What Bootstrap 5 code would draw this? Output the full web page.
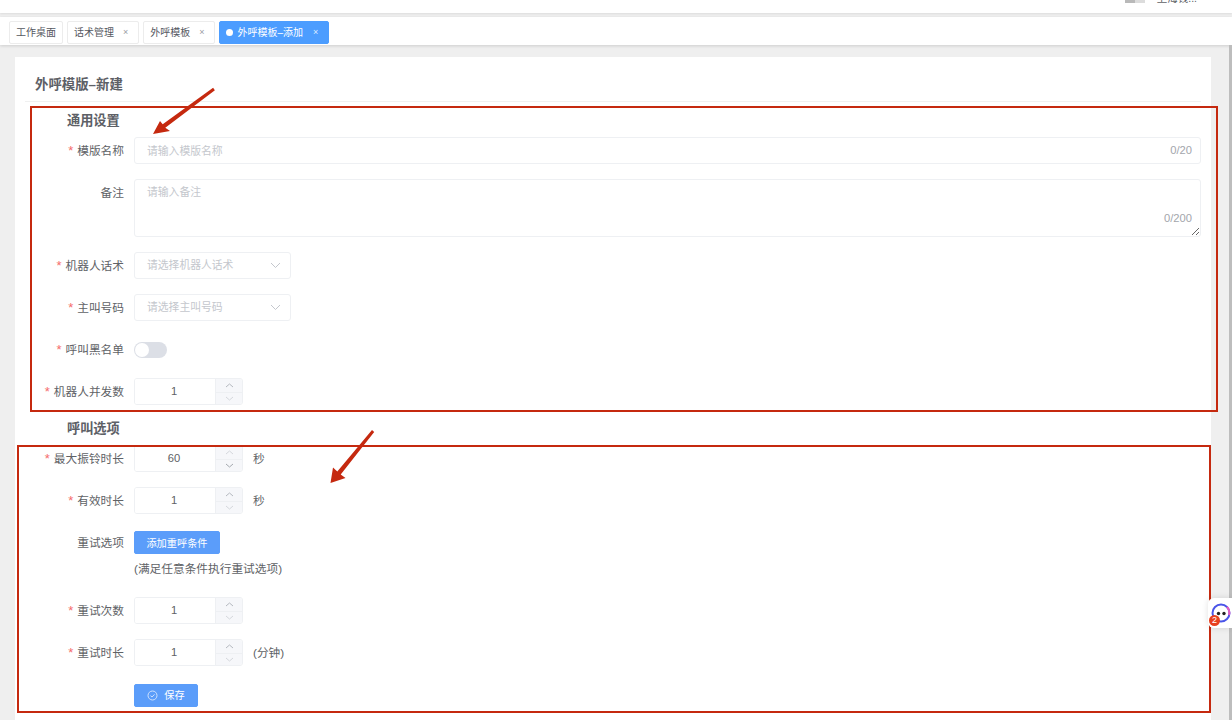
<!DOCTYPE html>
<html lang="zh-CN">
<head>
<meta charset="utf-8">
<title>外呼模版-新建</title>
<link href="https://cdn.jsdelivr.net/npm/bootstrap@5.3.0/dist/css/bootstrap.min.css" rel="stylesheet">
<style>
html,body{height:720px;overflow:hidden}
body{background:#efefef;font-family:"Liberation Sans","Noto Sans CJK SC",sans-serif;font-size:11.7px;color:#606266;position:relative}
.topstrip{height:13px;background:#fff;overflow:hidden;margin-bottom:4px;position:relative;box-shadow:0 1px 2px rgba(0,0,0,.08)}
.topuser{height:13px;margin-top:-8px;padding-right:35px;color:#606266;font-size:10.5px;gap:12px}
.topavatar{width:20px;height:8px;background:linear-gradient(90deg,#b9b9b9 50%,#dcdcdc 50%)}
.tabstrip{height:28px;background:#fff;padding:4px 9px 0;gap:4px;box-shadow:0 1px 3px rgba(0,0,0,.14);position:relative}
.tabitem{height:23px;padding:0 6px;background:#fff;border:1px solid #ececec;border-radius:2px;font-size:10px;color:#55585f;white-space:nowrap}
.tabitem b{font-weight:400;font-size:9px;color:#9a9da3;margin-left:9px;margin-right:3px}
.tabitem:nth-child(2) b{margin-right:4px}
.tabon{background:#4c9dff;border-color:#4c9dff;color:#fff}
.tabon b{color:#dcebff;margin-left:10px;margin-right:4px}
.tabdot{width:7px;height:7px;border-radius:50%;background:#fff;margin-right:5px}
.pagebody{padding:12px 21px 0 15px}
.sheet{height:663px;background:#fff;padding:0 10px}
.sheethead{height:45px;padding-left:10px;margin-bottom:9px;border-bottom:1px solid #f0f0f0;font-size:13.4px;font-weight:700;color:#5d6066;line-height:56px}
.grouptitle{height:18px;line-height:19px;padding-left:42px;font-size:13.2px;font-weight:700;color:#5d6066;margin-bottom:8px}
.groupgap{margin-top:14px;margin-bottom:7px;line-height:17px}
.fieldrow{min-height:27px;margin-bottom:15px;margin-left:-10px}
.fieldlabel{width:109px;height:27px;margin-right:10px;text-align:right;flex:none;line-height:27.5px;color:#606266;font-size:11.7px}
.req{color:#f56c6c;margin-right:4px;font-size:13px;line-height:1}
.fieldbox{height:27px;line-height:27px;border:1px solid #eef0f3;border-radius:3px;background:#fff;padding:0 12px 0 12px;font-size:10.8px;color:#c4c7cd}
.namebox{width:1067px}
.form-control.namebox,.form-control.notebox{font-size:10.8px;color:#606266;border-color:#eef0f3;border-radius:3px;box-shadow:none;padding-left:12px}
.form-control.namebox{height:27px;min-height:27px;padding-top:0;padding-bottom:0}
.form-control.notebox{height:58px;width:1067px;padding-top:4px;resize:both}
.form-control::placeholder{color:#c4c7cd}
.counter{position:absolute;right:9px;color:#a3a6ac;font-size:11.2px}
.notecount{bottom:10px}
.namecount{top:0;line-height:27px}
.selbox{width:157px;padding-right:9px}
.stepper{width:109px;height:27px;border:1px solid #eef0f3;border-radius:3px;overflow:hidden;background:#fff}
.stepval{width:80px;text-align:center;border:0;outline:0;padding:0 2px 0 0;background:#fff;color:#606266;font-size:11.2px}
.stepbtns{width:27px;background:#f6f7fa;border-left:1px solid #eef0f3}
.stepbtns span{flex:1 1 50%}
.stepbtns span+span{border-top:1px solid #eef0f3}
.unit{margin-left:10px;line-height:27px;color:#606266;font-size:11.7px}
.switchtrack{width:33px;height:16px;border-radius:8px;background:#dcdfe6;padding:1px;margin-top:6px}
.switchknob{width:14px;height:14px;border-radius:50%;background:#fff}
.btn.addbtn{width:86px;height:23px;padding:0;font-size:10.2px;line-height:23px;border-radius:2px;background:#5b9dfa;border-color:#5b9dfa;color:#fff;margin-top:2px}
.btn.savebtn{width:64px;height:23px;padding:0;font-size:10.2px;border-radius:2px;background:#5b9dfa;border-color:#5b9dfa;color:#fff;gap:6px;margin-top:3px}
.retrynote{line-height:18px;margin-top:6px;color:#606266;font-size:11.7px}
.retryrow{height:53px;margin-bottom:15px}
.markbox{position:absolute;border:2px solid #c5290f;pointer-events:none}
.markone{left:30px;top:106px;width:1188px;height:306px}
.marktwo{left:17px;top:445px;width:1194px;height:268px}
.markarrow{position:absolute;left:0;top:0;pointer-events:none}
.edgebar{position:absolute;right:0;top:45px;width:3px;height:675px;background:#bdbdbd}
.chatdock{position:absolute;left:1208px;top:598px;width:24px;height:30px;background:#fff;border-radius:6px 0 0 6px;box-shadow:0 0 6px rgba(0,0,0,.12)}
.chatbadge{position:absolute;left:1px;top:17px;width:11px;height:11px;border-radius:50%;background:#e8401f;color:#fff;font-size:9px;line-height:11px;text-align:center}
</style>
</head>
<body>
<div class="topstrip"><div class="topuser d-flex justify-content-end align-items-center"><span class="topavatar"></span><span>上海钱...</span></div></div>
<div class="tabstrip d-flex">
  <div class="tabitem d-flex align-items-center">工作桌面</div>
  <div class="tabitem d-flex align-items-center">话术管理<b>×</b></div>
  <div class="tabitem d-flex align-items-center">外呼模板<b>×</b></div>
  <div class="tabitem tabon d-flex align-items-center"><span class="tabdot"></span>外呼模板–添加<b>×</b></div>
</div>
<div class="pagebody">
  <div class="sheet">
    <div class="sheethead">外呼模版–新建</div>
    <div class="grouptitle">通用设置</div>

    <div class="fieldrow d-flex position-relative">
      <div class="fieldlabel"><span class="req">*</span>模版名称</div>
      <input class="form-control namebox" placeholder="请输入模版名称">
      <span class="counter namecount">0/20</span>
    </div>
    <div class="fieldrow d-flex position-relative">
      <div class="fieldlabel">备注</div>
      <textarea class="form-control notebox" placeholder="请输入备注"></textarea>
      <span class="counter notecount">0/200</span>
    </div>
    <div class="fieldrow d-flex">
      <div class="fieldlabel"><span class="req">*</span>机器人话术</div>
      <div class="fieldbox selbox d-flex justify-content-between align-items-center"><span>请选择机器人话术</span>
        <svg width="11" height="7" viewBox="0 0 11 7"><path d="M1 1l4.5 4.5L10 1" fill="none" stroke="#c4c7cd"/></svg></div>
    </div>
    <div class="fieldrow d-flex">
      <div class="fieldlabel"><span class="req">*</span>主叫号码</div>
      <div class="fieldbox selbox d-flex justify-content-between align-items-center"><span>请选择主叫号码</span>
        <svg width="11" height="7" viewBox="0 0 11 7"><path d="M1 1l4.5 4.5L10 1" fill="none" stroke="#c4c7cd"/></svg></div>
    </div>
    <div class="fieldrow d-flex">
      <div class="fieldlabel"><span class="req">*</span>呼叫黑名单</div>
      <div class="switchtrack"><div class="switchknob"></div></div>
    </div>
    <div class="fieldrow d-flex">
      <div class="fieldlabel"><span class="req">*</span>机器人并发数</div>
      <div class="stepper d-flex"><input class="stepval" value="1"><div class="stepbtns d-flex flex-column">
        <span class="d-flex align-items-center justify-content-center"><svg width="9" height="5" viewBox="0 0 9 5"><path d="M1 4l3.5-3L8 4" fill="none" stroke="#b4b8bf"/></svg></span>
        <span class="d-flex align-items-center justify-content-center"><svg width="9" height="5" viewBox="0 0 9 5"><path d="M1 1l3.5 3L8 1" fill="none" stroke="#d4d7dc"/></svg></span></div></div>
    </div>

    <div class="grouptitle groupgap">呼叫选项</div>

    <div class="fieldrow d-flex">
      <div class="fieldlabel"><span class="req">*</span>最大振铃时长</div>
      <div class="stepper d-flex"><input class="stepval" value="60"><div class="stepbtns d-flex flex-column">
        <span class="d-flex align-items-center justify-content-center"><svg width="9" height="5" viewBox="0 0 9 5"><path d="M1 4l3.5-3L8 4" fill="none" stroke="#d4d7dc"/></svg></span>
        <span class="d-flex align-items-center justify-content-center"><svg width="9" height="5" viewBox="0 0 9 5"><path d="M1 1l3.5 3L8 1" fill="none" stroke="#a4a8af"/></svg></span></div></div>
      <span class="unit">秒</span>
    </div>
    <div class="fieldrow d-flex">
      <div class="fieldlabel"><span class="req">*</span>有效时长</div>
      <div class="stepper d-flex"><input class="stepval" value="1"><div class="stepbtns d-flex flex-column">
        <span class="d-flex align-items-center justify-content-center"><svg width="9" height="5" viewBox="0 0 9 5"><path d="M1 4l3.5-3L8 4" fill="none" stroke="#b4b8bf"/></svg></span>
        <span class="d-flex align-items-center justify-content-center"><svg width="9" height="5" viewBox="0 0 9 5"><path d="M1 1l3.5 3L8 1" fill="none" stroke="#d4d7dc"/></svg></span></div></div>
      <span class="unit">秒</span>
    </div>
    <div class="fieldrow retryrow d-flex">
      <div class="fieldlabel">重试选项</div>
      <div>
        <button class="btn btn-primary addbtn d-block" type="button">添加重呼条件</button>
        <div class="retrynote">(满足任意条件执行重试选项)</div>
      </div>
    </div>
    <div class="fieldrow d-flex">
      <div class="fieldlabel"><span class="req">*</span>重试次数</div>
      <div class="stepper d-flex"><input class="stepval" value="1"><div class="stepbtns d-flex flex-column">
        <span class="d-flex align-items-center justify-content-center"><svg width="9" height="5" viewBox="0 0 9 5"><path d="M1 4l3.5-3L8 4" fill="none" stroke="#b4b8bf"/></svg></span>
        <span class="d-flex align-items-center justify-content-center"><svg width="9" height="5" viewBox="0 0 9 5"><path d="M1 1l3.5 3L8 1" fill="none" stroke="#d4d7dc"/></svg></span></div></div>
    </div>
    <div class="fieldrow d-flex">
      <div class="fieldlabel"><span class="req">*</span>重试时长</div>
      <div class="stepper d-flex"><input class="stepval" value="1"><div class="stepbtns d-flex flex-column">
        <span class="d-flex align-items-center justify-content-center"><svg width="9" height="5" viewBox="0 0 9 5"><path d="M1 4l3.5-3L8 4" fill="none" stroke="#b4b8bf"/></svg></span>
        <span class="d-flex align-items-center justify-content-center"><svg width="9" height="5" viewBox="0 0 9 5"><path d="M1 1l3.5 3L8 1" fill="none" stroke="#d4d7dc"/></svg></span></div></div>
      <span class="unit">(分钟)</span>
    </div>
    <div class="fieldrow d-flex">
      <div class="fieldlabel"></div>
      <button class="btn btn-primary savebtn d-flex align-items-center justify-content-center" type="button">
        <svg width="11" height="11" viewBox="0 0 11 11"><circle cx="5.5" cy="5.5" r="4.5" fill="none" stroke="#cfe2fd"/><path d="M3.5 5.7l1.5 1.3 2.5-2.6" fill="none" stroke="#cfe2fd"/></svg>保存</button>
    </div>
  </div>
</div>

<div class="edgebar"></div>
<div class="markbox markone"></div>
<div class="markbox marktwo"></div>
<svg class="markarrow" width="1232" height="720" viewBox="0 0 1232 720">
  <g fill="#c5290f">
    <path d="M213.1 87.8L214.9 90.2L165.3 127.8L170 131L153 134L160 121L162.7 124.2Z"/>
    <path d="M372 430L374.2 431.9L340.7 474.4L345.5 478L330.5 483L333 467.5L337.3 471.6Z"/>
  </g>
</svg>
<div class="chatdock">
  <svg class="d-block" width="24" height="30" viewBox="0 0 24 30"><circle cx="13" cy="15" r="8.5" fill="none" stroke="#4a55e8" stroke-width="2"/><path d="M19 9a8.5 8.5 0 0 1 2 8" fill="none" stroke="#e85ac0" stroke-width="2"/><circle cx="10.5" cy="15.5" r="1.7" fill="#222"/><circle cx="16" cy="15.5" r="1.7" fill="#222"/></svg>
  <span class="chatbadge">2</span>
</div>
</body>
</html>
